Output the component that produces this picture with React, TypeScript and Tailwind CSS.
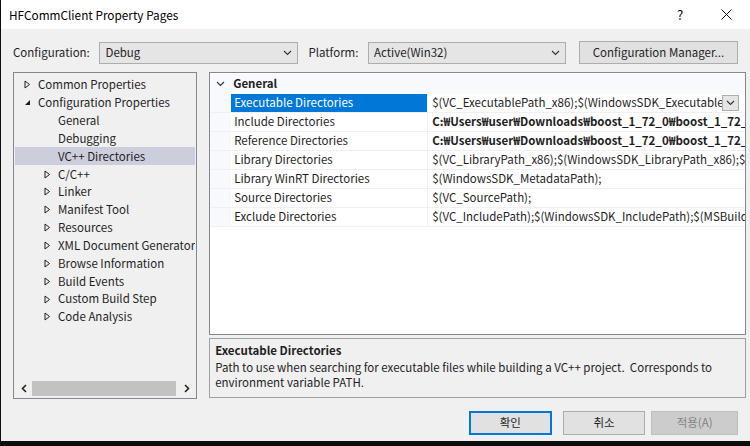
import React from "react";

const FONT = "font-['Malgun_Gothic','Noto_Sans_CJK_KR',sans-serif]";

function TriRight() {
  return (
    <svg width="7" height="9" viewBox="0 0 7 9" className="shrink-0">
      <path d="M1 1 L5.5 4.5 L1 8 Z" fill="none" stroke="#1e1e1e" strokeWidth="1" />
    </svg>
  );
}

function TriDown() {
  return (
    <svg width="7" height="9" viewBox="0 0 7 9" className="shrink-0">
      <path d="M6 2 L6 7 L1 7 Z" fill="#1e1e1e" />
    </svg>
  );
}

function Chevron({ className = "" }: { className?: string }) {
  return (
    <svg width="9" height="6" viewBox="0 0 9 6" className={className}>
      <path d="M1 1 L4.5 4.5 L8 1" fill="none" stroke="#333" strokeWidth="1.1" />
    </svg>
  );
}

const treeItems: { label: string; level: number; arrow: "right" | "down" | null; selected?: boolean }[] = [
  { label: "Common Properties", level: 1, arrow: "right" },
  { label: "Configuration Properties", level: 1, arrow: "down" },
  { label: "General", level: 2, arrow: null },
  { label: "Debugging", level: 2, arrow: null },
  { label: "VC++ Directories", level: 2, arrow: null, selected: true },
  { label: "C/C++", level: 2, arrow: "right" },
  { label: "Linker", level: 2, arrow: "right" },
  { label: "Manifest Tool", level: 2, arrow: "right" },
  { label: "Resources", level: 2, arrow: "right" },
  { label: "XML Document Generator", level: 2, arrow: "right" },
  { label: "Browse Information", level: 2, arrow: "right" },
  { label: "Build Events", level: 2, arrow: "right" },
  { label: "Custom Build Step", level: 2, arrow: "right" },
  { label: "Code Analysis", level: 2, arrow: "right" },
];

const props: { name: string; value: string; bold?: boolean; selected?: boolean }[] = [
  { name: "Executable Directories", value: "$(VC_ExecutablePath_x86);$(WindowsSDK_ExecutablePath_x86);$(VS_ExecutablePath);", selected: true },
  { name: "Include Directories", value: "C:₩Users₩user₩Downloads₩boost_1_72_0₩boost_1_72_0;$(IncludePath)", bold: true },
  { name: "Reference Directories", value: "C:₩Users₩user₩Downloads₩boost_1_72_0₩boost_1_72_0₩stage₩lib;$(ReferencePath)", bold: true },
  { name: "Library Directories", value: "$(VC_LibraryPath_x86);$(WindowsSDK_LibraryPath_x86);$(NETFXKitsDir)Lib₩um₩x86" },
  { name: "Library WinRT Directories", value: "$(WindowsSDK_MetadataPath);" },
  { name: "Source Directories", value: "$(VC_SourcePath);" },
  { name: "Exclude Directories", value: "$(VC_IncludePath);$(WindowsSDK_IncludePath);$(MSBuild_ExecutablePath);$(VC_LibraryPath_x86);" },
];

export default function App() {
  return (
    <div className={`w-[750px] h-[446px] bg-[#0d0d0d] overflow-hidden ${FONT} text-[11.5px] text-[#1e1e1e]`}>
      <div className="w-[749px] h-[441px] ml-[1px] bg-[#f0f0f0] flex flex-col">
        {/* title bar */}
        <div className="h-[29px] bg-white flex items-center pl-[8px] shrink-0">
          <span className="text-[11.8px] text-black">HFCommClient Property Pages</span>
          <span className="ml-auto text-[13px] text-black w-[46px] text-center">?</span>
          <span className="w-[46px] flex justify-center mr-[1px]">
            <svg width="11" height="11" viewBox="0 0 11 11">
              <path d="M0.5 0.5 L10.5 10.5 M10.5 0.5 L0.5 10.5" stroke="#111" strokeWidth="1" />
            </svg>
          </span>
        </div>

        <div className="flex flex-col px-[12px] pt-[12px]">
          {/* configuration row */}
          <div className="flex items-center h-[23px]">
            <span className="w-[87px]">Configuration:</span>
            <div className="w-[200px] h-[22px] border border-[#adadad] bg-[#e5e5e5] flex items-center pl-[5px] pr-[5px]">
              <span>Debug</span>
              <Chevron className="ml-auto" />
            </div>
            <span className="ml-[10px] w-[60px]">Platform:</span>
            <div className="w-[199px] h-[22px] border border-[#adadad] bg-[#e5e5e5] flex items-center pl-[5px] pr-[5px]">
              <span>Active(Win32)</span>
              <Chevron className="ml-auto" />
            </div>
            <div className="ml-[13px] w-[160px] h-[23px] border border-[#adadad] bg-[#e1e1e1] flex items-center justify-center">
              Configuration Manager...
            </div>
          </div>

          <div className="flex mt-[8px] gap-[12px]">
            {/* tree */}
            <div className="w-[185px] h-[327px] border border-[#828790] bg-[#f0f0f0] flex flex-col pt-[3px] px-[1px]">
              <div className="flex-1 flex flex-col">
                {treeItems.map((it) => (
                  <div
                    key={it.label}
                    className={`h-[17.85px] flex items-center whitespace-nowrap overflow-hidden ${it.selected ? "bg-[#cccedb]" : ""}`}
                  >
                    <span className={`flex justify-center ${it.level === 1 ? "w-[24px] ml-[0px]" : "w-[24px] ml-[20px]"}`}>
                      {it.arrow === "right" && <TriRight />}
                      {it.arrow === "down" && <TriDown />}
                    </span>
                    <span className="ml-[-1px]">{it.label}</span>
                  </div>
                ))}
              </div>
              <div className="h-[17px] mb-[1px] flex items-center">
                <span className="w-[17px] flex justify-center">
                  <svg width="6" height="9" viewBox="0 0 6 9">
                    <path d="M5 1 L1.5 4.5 L5 8" fill="none" stroke="#222" strokeWidth="1.6" />
                  </svg>
                </span>
                <div className="w-[144px] h-[15px] bg-[#c2c2c2]" />
                <span className="ml-auto w-[17px] flex justify-center">
                  <svg width="6" height="9" viewBox="0 0 6 9">
                    <path d="M1 1 L4.5 4.5 L1 8" fill="none" stroke="#222" strokeWidth="1.6" />
                  </svg>
                </span>
              </div>
            </div>

            {/* right column */}
            <div className="flex flex-col w-[537px]">
              <div className="h-[263px] border border-[#828790] bg-white flex flex-col pt-[1px]">
                <div className="h-[20px] flex items-center bg-[#f7f9fc]">
                  <span className="w-[21px] flex justify-center">
                    <Chevron />
                  </span>
                  <span className="font-bold pl-[2px]">General</span>
                </div>
                {props.map((p) => (
                  <div key={p.name} className="h-[19px] flex border-b border-[#f0f0f0]">
                    <div className="w-[21px] bg-[#f7f9fc] shrink-0" />
                    <div
                      className={`w-[197px] shrink-0 pl-[3px] flex items-center border-r border-[#f0f0f0] ${p.selected ? "bg-[#0078d7] text-white" : ""}`}
                    >
                      {p.name}
                    </div>
                    <div className={`flex-1 min-w-0 flex items-center pl-[4px] ${p.selected ? "pr-[6px]" : ""}`}>
                      <div className="flex-1 min-w-0 overflow-hidden">
                        <span className={`whitespace-nowrap ${p.bold ? "font-bold" : ""}`}>{p.value}</span>
                      </div>
                      {p.selected && (
                        <div className="shrink-0 w-[17px] h-[16px] border border-[#adadad] bg-[#e5e5e5] flex items-center justify-center">
                          <Chevron />
                        </div>
                      )}
                    </div>
                  </div>
                ))}
              </div>
              <div className="mt-[3px] h-[60px] border border-[#a0a0a0] bg-[#f0f0f0] px-[5px] pt-[3px]">
                <div className="font-bold leading-[16px]">Executable Directories</div>
                <div className="mt-[2px] leading-[14.5px]">
                  Path to use when searching for executable files while building a VC++ project.&nbsp; Corresponds to
                  <br />
                  environment variable PATH.
                </div>
              </div>
            </div>
          </div>

          {/* buttons */}
          <div className="flex mt-[12px] pl-[456px]">
            <div className="w-[84px] h-[24px] border-2 border-[#0078d7] bg-[#e1e1e1] flex items-center justify-center">확인</div>
            <div className="ml-[11px] w-[84px] h-[24px] border border-[#adadad] bg-[#e1e1e1] flex items-center justify-center">취소</div>
            <div className="ml-[6px] w-[88px] h-[24px] border border-[#bfbfbf] bg-[#cccccc] text-[#838383] flex items-center justify-center">적용(A)</div>
          </div>
        </div>
      </div>
    </div>
  );
}
